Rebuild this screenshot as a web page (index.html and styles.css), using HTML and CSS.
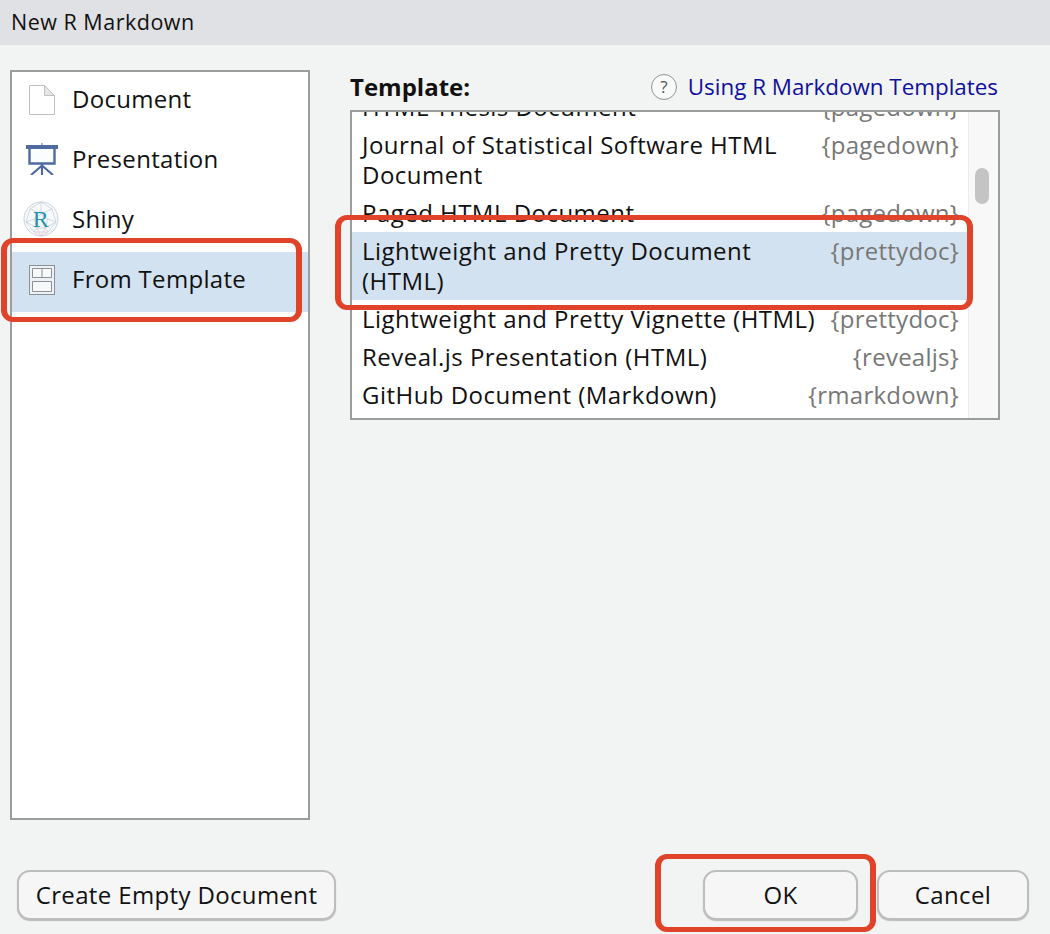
FILE: index.html
```html
<!DOCTYPE html>
<html lang="en">
<head>
  <meta charset="UTF-8" />
  <title>New R Markdown</title>
  <link rel="stylesheet" href="styles.css">
</head>
<body>
  <div class="titlebar">New R Markdown</div>

  <div class="content">
    <!-- Left list of document types -->
    <ul class="types">
      <li class="type">
        <span class="type-slot">
          <svg class="icon-doc" width="26" height="30" viewBox="0 0 26 30">
            <path d="M0.5 0.5H15.5L25.5 10.5V29.5H0.5Z" fill="#fff" stroke="#bfc1c3" />
            <path d="M15.5 0.5V10.5H25.5Z" fill="#e6e7e8" stroke="#bfc1c3" />
          </svg>
        </span>
        Document
      </li>
      <li class="type">
        <span class="type-slot">
          <svg width="32" height="32" viewBox="0 0 32 32">
            <path d="M16 0V3" stroke="#4f6a9e" />
            <path d="M0 2H32V6H0Z" fill="#4f6a9e" />
            <path d="M3.5 6V20.5H28.5V6" fill="#fbfcfd" stroke="#4f6a9e" stroke-width="2.4" />
            <path d="M16 21V32M16 22.5L5 32M16 22.5L27 32" fill="none" stroke="#4f6a9e" stroke-width="2.2" />
          </svg>
        </span>
        Presentation
      </li>
      <li class="type">
        <span class="type-slot">
          <svg class="icon-shiny" width="36" height="36" viewBox="0 0 36 36">
            <circle cx="18" cy="18" r="17" fill="#f7f9fb" stroke="#c9d2dc" />
            <path d="M18 1L29 8L33 21L25 31L11 31L3 21L7 8ZM7 8L18 13L29 8M18 1V13M3 21L11 18M33 21L25 18M11 18L18 13L25 18L22 27H14ZM11 31L14 27M25 31L22 27M3 21L14 27M33 21L22 27" fill="none" stroke="#c6d0de" stroke-width="0.8" />
            <path d="M11 31L18 35L25 31M14 27L18 35L22 27" fill="none" stroke="#e6c6d6" stroke-width="0.8" />
            <text class="shiny-r" x="18" y="26" text-anchor="middle">R</text>
          </svg>
        </span>
        Shiny
      </li>
      <li class="type selected">
        <span class="type-slot">
          <svg class="icon-template" width="26" height="30" viewBox="0 0 26 30">
            <rect x="0.5" y="0.5" width="25" height="29" fill="#eef2f6" stroke="#8c9094" />
            <path d="M3.5 3.5H22.5V12.5H3.5ZM13 3.5V12.5M3.5 16.5H22.5V26.5H3.5Z" fill="#f8f9fa" stroke="#8c9094" />
          </svg>
        </span>
        From Template
      </li>
    </ul>

    <!-- Template chooser -->
    <div class="templates">
      <div class="templates-head">
        <span class="templates-label">Template:</span>
        <span class="help">
          <span class="help-icon">?</span>
          <a class="help-link" href="#">Using R Markdown Templates</a>
        </span>
      </div>
      <div class="template-box">
        <div class="template-list">
          <div class="template">
            <span class="template-name">HTML Thesis Document</span>
            <span class="template-pkg">{pagedown}</span>
          </div>
          <div class="template">
            <span class="template-name">Journal of Statistical Software HTML Document</span>
            <span class="template-pkg">{pagedown}</span>
          </div>
          <div class="template">
            <span class="template-name">Paged HTML Document</span>
            <span class="template-pkg">{pagedown}</span>
          </div>
          <div class="template selected">
            <span class="template-name">Lightweight and Pretty Document (HTML)</span>
            <span class="template-pkg">{prettydoc}</span>
          </div>
          <div class="template">
            <span class="template-name">Lightweight and Pretty Vignette (HTML)</span>
            <span class="template-pkg">{prettydoc}</span>
          </div>
          <div class="template">
            <span class="template-name">Reveal.js Presentation (HTML)</span>
            <span class="template-pkg">{revealjs}</span>
          </div>
          <div class="template">
            <span class="template-name">GitHub Document (Markdown)</span>
            <span class="template-pkg">{rmarkdown}</span>
          </div>
        </div>
        <div class="scrollbar"><div class="scroll-thumb"></div></div>
      </div>
    </div>
  </div>

  <div class="footer">
    <button class="button create">Create Empty Document</button>
    <div class="footer-right">
      <button class="button ok">OK</button>
      <button class="button cancel">Cancel</button>
    </div>
  </div>

  <!-- Red annotation boxes drawn over the dialog -->
  <div class="mark mark-type"></div>
  <div class="mark mark-template"></div>
  <div class="mark mark-ok"></div>
</body>
</html>
```

FILE: styles.css
```css
html, body {
  margin: 0;
  padding: 0;
}

body {
  position: relative;
  width: 1050px;
  height: 934px;
  overflow: hidden;
  background-color: #f2f3f3;
  color: #111;
  font-family: "Open Sans", "Noto Sans", sans-serif;
  font-size: 24px;
}

.titlebar {
  box-sizing: border-box;
  height: 45px;
  line-height: 43px;
  padding-left: 11px;
  background-color: #e0e1e4;
  font-size: 21.5px;
  letter-spacing: 0.5px;
}

.content {
  display: flex;
  height: 775px;
  padding: 25px 50px 0 10px;
}

.types {
  width: 296px;
  height: 746px;
  margin: 0;
  padding: 0;
  list-style: none;
  background-color: #fff;
  border: 2px solid #9c9c9c;
}

.type {
  display: flex;
  align-items: center;
  box-sizing: border-box;
  height: 60px;
  padding-bottom: 7px;
  letter-spacing: 0.3px;
}

.type.selected {
  background-color: #d3e2f0;
}

.type-slot {
  display: flex;
  justify-content: center;
  width: 60px;
}

.icon-doc {
  margin-top: 3px;
}

.icon-shiny {
  margin-left: -2px;
}

.icon-template {
  margin-top: 3px;
}

.shiny-r {
  font-family: "Liberation Serif", serif;
  font-size: 24px;
  fill: #2a93ae;
}

.templates {
  width: 650px;
  margin-left: 40px;
}

.templates-head {
  display: flex;
  justify-content: space-between;
  align-items: center;
  box-sizing: border-box;
  height: 40px;
  padding: 0 2px 7px 0;
}

.templates-label {
  font-weight: 700;
  font-size: 24px;
}

.help {
  display: flex;
  align-items: center;
  gap: 11px;
}

.help-icon {
  width: 24px;
  height: 24px;
  line-height: 24px;
  border: 1px solid #8f9498;
  border-radius: 50%;
  background-color: #f8f9f9;
  text-align: center;
  font-size: 17px;
  color: #555;
}

.help-link {
  color: #10109a;
  text-decoration: none;
  font-size: 22.4px;
}

.template-box {
  display: flex;
  height: 306px;
  background-color: #fff;
  border: 2px solid #9c9c9c;
  overflow: hidden;
}

.template-list {
  flex: 1;
  margin-top: -24px;
}

.template {
  display: flex;
  justify-content: space-between;
  gap: 10px;
  padding: 4px 9px 4px 10px;
  line-height: 30px;
  letter-spacing: 0.47px;
}

.template.selected {
  background-color: #d3e2f0;
}

.template-pkg {
  flex-shrink: 0;
  color: #777;
  letter-spacing: 0.25px;
}

.scrollbar {
  width: 30px;
  background-color: #f8f8f8;
  border-left: 1px solid #ececec;
  padding-top: 56px;
  box-sizing: border-box;
}

.scroll-thumb {
  width: 14px;
  height: 36px;
  margin-left: 6px;
  border-radius: 7px;
  background-color: #c4c4c4;
}

.footer {
  display: flex;
  justify-content: space-between;
  padding: 25px 21px 0 17px;
}

.footer-right {
  display: flex;
  gap: 19px;
}

.button {
  height: 50px;
  padding: 0 0 2px;
  background-color: #f6f6f7;
  border: 2px solid #bdbdbd;
  border-radius: 13px;
  box-shadow: 0 1px 1px #bbb;
  color: #111;
  font-family: inherit;
  font-size: 24px;
  letter-spacing: 0.36px;
}

.create {
  width: 319px;
}

.ok {
  width: 155px;
}

.cancel {
  width: 152px;
}

.mark {
  position: absolute;
  box-sizing: border-box;
  border-style: solid;
  border-color: #e0432a;
  border-width: 5px 6px;
  border-radius: 12px;
}

.mark-type {
  left: 1px;
  top: 238px;
  width: 301px;
  height: 84px;
}

.mark-template {
  left: 335px;
  top: 215px;
  width: 638px;
  height: 95px;
}

.mark-ok {
  left: 655px;
  top: 854px;
  width: 221px;
  height: 78px;
}
```
